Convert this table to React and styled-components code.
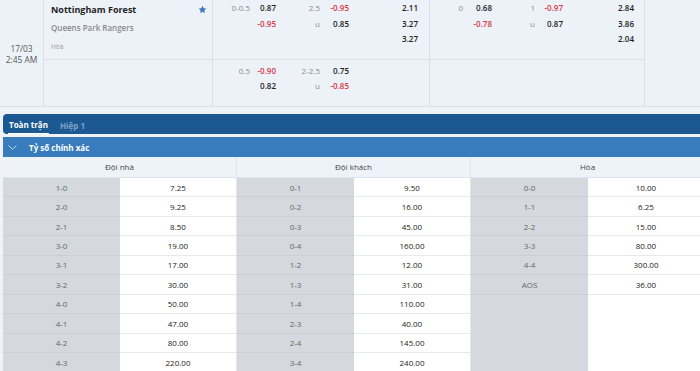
import React from "react";
import styled, { createGlobalStyle } from "styled-components";

const GlobalStyle = createGlobalStyle`
  html, body {
    margin: 0;
    padding: 0;
    overflow: hidden;
    background: #eff2f6;
    font-family: "Open Sans", "Noto Sans", Arial, sans-serif;
  }
`;

const home = [
  ["1-0", "7.25"], ["2-0", "9.25"], ["2-1", "8.50"], ["3-0", "19.00"], ["3-1", "17.00"],
  ["3-2", "30.00"], ["4-0", "50.00"], ["4-1", "47.00"], ["4-2", "80.00"], ["4-3", "220.00"],
];
const away = [
  ["0-1", "9.50"], ["0-2", "16.00"], ["0-3", "45.00"], ["0-4", "160.00"], ["1-2", "12.00"],
  ["1-3", "31.00"], ["1-4", "110.00"], ["2-3", "40.00"], ["2-4", "145.00"], ["3-4", "240.00"],
];
const draw = [
  ["0-0", "10.00"], ["1-1", "6.25"], ["2-2", "15.00"], ["3-3", "80.00"], ["4-4", "300.00"], ["AOS", "36.00"],
];

const StarIcon = () => (
  <svg width="9" height="9" viewBox="0 0 24 24">
    <path
      fill="#3b78b6"
      d="M12 1.8l3.1 6.6 7.2.9-5.3 5 1.4 7.1L12 17.9l-6.4 3.5 1.4-7.1-5.3-5 7.2-.9z"
    />
  </svg>
);

const Chevron = () => (
  <svg width="9" height="5" viewBox="0 0 9 5">
    <path d="M0.5 0.5l4 3.8 4-3.8" fill="none" stroke="#cfe0f2" strokeWidth="0.9" />
  </svg>
);

const ScoreList = ({ rows }) =>
  rows.map(([score, odd]) => (
    <ScoreRow key={score}>
      <ScoreCell>{score}</ScoreCell>
      <ValueCell>{odd}</ValueCell>
    </ScoreRow>
  ));

const App = () => {
  return (
    <Page>
      <GlobalStyle />
      <Match>
        <TimeCell>
          <span>17/03</span>
          <span>2:45 AM</span>
        </TimeCell>
        <TeamCell $top>
          <TeamLine>
            <HomeTeam>Nottingham Forest</HomeTeam>
            <StarIcon />
          </TeamLine>
          <AwayTeam>Queens Park Rangers</AwayTeam>
          <DrawLabel>Hòa</DrawLabel>
        </TeamCell>
        <OddsCell $top $cols="37px 26px 44px 29px 69px" $padRight="12px">
          <Label>0-0.5</Label><Odd>0.87</Odd><Label>2.5</Label><Odd $red>-0.95</Odd><Odd>2.11</Odd>
          <Label /><Odd $red>-0.95</Odd><Label>u</Label><Odd>0.85</Odd><Odd>3.27</Odd>
          <Label /><Odd /><Label /><Odd /><Odd>3.27</Odd>
        </OddsCell>
        <OddsCell $top $cols="33px 29px 43px 28px 71px" $padRight="11px">
          <Label>0</Label><Odd>0.68</Odd><Label>1</Label><Odd $red>-0.97</Odd><Odd>2.84</Odd>
          <Label /><Odd $red>-0.78</Odd><Label>u</Label><Odd>0.87</Odd><Odd>3.86</Odd>
          <Label /><Odd /><Label /><Odd /><Odd>2.04</Odd>
        </OddsCell>
        <EndCell />
        <TeamCell />
        <OddsCell $cols="37px 26px 44px 29px 69px" $padRight="12px">
          <Label>0.5</Label><Odd $red>-0.90</Odd><Label>2-2.5</Label><Odd>0.75</Odd><Odd />
          <Label /><Odd>0.82</Odd><Label>u</Label><Odd $red>-0.85</Odd><Odd />
        </OddsCell>
        <OddsCell $cols="33px 29px 43px 28px 71px" $padRight="11px" />
      </Match>

      <Tabs>
        <Tab $active>Toàn trận</Tab>
        <Tab>Hiệp 1</Tab>
      </Tabs>

      <SectionHeader>
        <Chevron />
        <SectionTitle>Tỷ số chính xác</SectionTitle>
      </SectionHeader>

      <Board>
        <Column>
          <ColumnHead>Đội nhà</ColumnHead>
          <ScoreList rows={home} />
        </Column>
        <Column>
          <ColumnHead>Đội khách</ColumnHead>
          <ScoreList rows={away} />
        </Column>
        <Column $split>
          <ColumnHead>Hòa</ColumnHead>
          <ScoreList rows={draw} />
        </Column>
      </Board>
    </Page>
  );
};

export default App;

const Page = styled.div`
  width: 700px;
  height: 371px;
  overflow: hidden;
`;

const Match = styled.div`
  display: grid;
  grid-template-columns: 44px 169px 217px 215px 1fr;
  grid-template-rows: 60px 46px;
  background: #edf2f9;
  border-bottom: 1px solid #d9dfe8;
`;

const TimeCell = styled.div`
  grid-row: span 2;
  display: flex;
  flex-direction: column;
  align-items: center;
  justify-content: center;
  padding-top: 2px;
  border-right: 1px solid #d9dfe8;
  font-size: 8.4px;
  line-height: 11px;
  color: #555;
`;

const TeamCell = styled.div`
  display: flex;
  flex-direction: column;
  padding: 0 5px 0 7px;
  border-right: 1px solid #d9dfe8;
  border-bottom: ${(p) => (p.$top ? "1px solid #d9dfe8" : "none")};
`;

const TeamLine = styled.div`
  display: flex;
  align-items: center;
  justify-content: space-between;
  height: 18px;
`;

const HomeTeam = styled.span`
  font-size: 9px;
  font-weight: 700;
  color: #222;
`;

const AwayTeam = styled.span`
  height: 20px;
  line-height: 20px;
  font-size: 8px;
  font-weight: 600;
  color: #8a8a8a;
`;

const DrawLabel = styled.span`
  line-height: 18px;
  font-size: 6.5px;
  color: #9a9a9a;
`;

const OddsCell = styled.div`
  display: grid;
  grid-template-columns: ${(p) => p.$cols};
  grid-auto-rows: ${(p) => (p.$top ? "15.5px" : "14.5px")};
  align-content: start;
  padding: ${(p) => (p.$top ? "0" : "3px")} ${(p) => p.$padRight} 0 0;
  border-right: 1px solid #d9dfe8;
  border-bottom: ${(p) => (p.$top ? "1px solid #d9dfe8" : "none")};
  font-size: 8px;
  line-height: 15px;
`;

const EndCell = styled.div`
  grid-row: span 2;
`;

const Label = styled.span`
  text-align: right;
  color: #8c8c8c;
`;

const Odd = styled.span`
  text-align: right;
  font-weight: 600;
  color: ${(p) => (p.$red ? "#d8363e" : "#222")};
`;

const Tabs = styled.div`
  display: flex;
  align-items: center;
  gap: 10px;
  height: 20px;
  margin: 7px 0 0 3px;
  padding: 0 5px;
  background: #1c5993;
  border-radius: 4px 0 0 4px;
`;

const Tab = styled.span`
  font-size: 8px;
  font-weight: 700;
  color: ${(p) => (p.$active ? "#ffffff" : "#7fa3c8")};
  border-bottom: ${(p) => (p.$active ? "1px solid #ffffff" : "none")};
  height: 17px;
  line-height: 17px;
  margin-top: 2px;
  padding: 0 1px;
`;

const SectionHeader = styled.div`
  display: flex;
  align-items: center;
  gap: 12px;
  height: 20px;
  margin: 3px 0 0 3px;
  padding-left: 5px;
  background: #397cbd;
`;

const SectionTitle = styled.span`
  font-size: 8px;
  font-weight: 700;
  color: #ffffff;
`;

const Board = styled.div`
  display: grid;
  grid-template-columns: repeat(3, 234px);
  margin-left: 3px;
  height: 220px;
`;

const Column = styled.div`
  display: flex;
  flex-direction: column;
  border-right: 1px solid #e2e6eb;
  background: ${(p) =>
    p.$split ? "linear-gradient(to right, #d5d8dc 117px, #ffffff 117px)" : "#ffffff"};
`;

const ColumnHead = styled.div`
  height: 20px;
  line-height: 20px;
  text-align: center;
  font-size: 8px;
  color: #444;
  background: #edf3f8;
  border-bottom: 1px solid #dde3ea;
`;

const ScoreRow = styled.div`
  display: grid;
  grid-template-columns: 117px 1fr;
  height: 19.45px;
  font-size: 8px;
`;

const ScoreCell = styled.div`
  display: flex;
  align-items: center;
  justify-content: center;
  background: #d5d8dc;
  color: #666;
  border-bottom: 1px solid #cbced2;
`;

const ValueCell = styled.div`
  display: flex;
  align-items: center;
  justify-content: center;
  background: #ffffff;
  color: #222;
  border-bottom: 1px solid #e8e9eb;
`;
